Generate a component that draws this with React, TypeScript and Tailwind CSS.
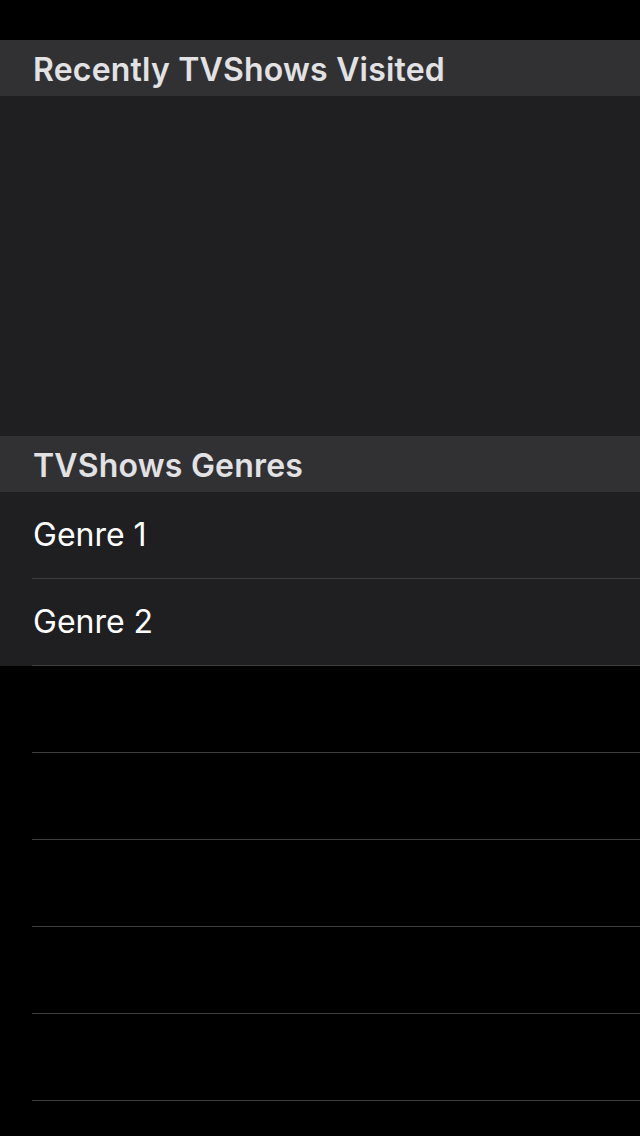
import React from 'react';

const genres = ['Genre 1', 'Genre 2'];
const emptyRows = 6;

function SectionHeader({ title }: { title: string }) {
  return (
    <div className="h-[56px] bg-[#313133] flex items-center pl-[33px] pt-[3px]">
      <span className="text-[32px] font-semibold text-[#e2e2e4] tracking-[0.2px]">{title}</span>
    </div>
  );
}

function Row({ label, dark }: { label?: string; dark?: boolean }) {
  return (
    <div className={dark ? 'bg-[#1f1f21] pl-[32px]' : 'bg-black pl-[32px]'}>
      <div className="h-[87px] border-b border-[#3d3d40] flex items-center">
        {label && <span className="text-[32px] text-white pl-px">{label}</span>}
      </div>
    </div>
  );
}

export default function App() {
  return (
    <div className="w-[640px] h-[1136px] bg-black overflow-hidden" style={{ fontFamily: 'Inter, "Noto Sans", sans-serif' }}>
      <div className="h-[40px]" />
      <SectionHeader title="Recently TVShows Visited" />
      <div className="h-[340px] bg-[#1f1f21]" />
      <SectionHeader title="TVShows Genres" />
      {genres.map((g) => (
        <Row key={g} label={g} dark />
      ))}
      {Array.from({ length: emptyRows }).map((_, i) => (
        <Row key={i} />
      ))}
    </div>
  );
}
